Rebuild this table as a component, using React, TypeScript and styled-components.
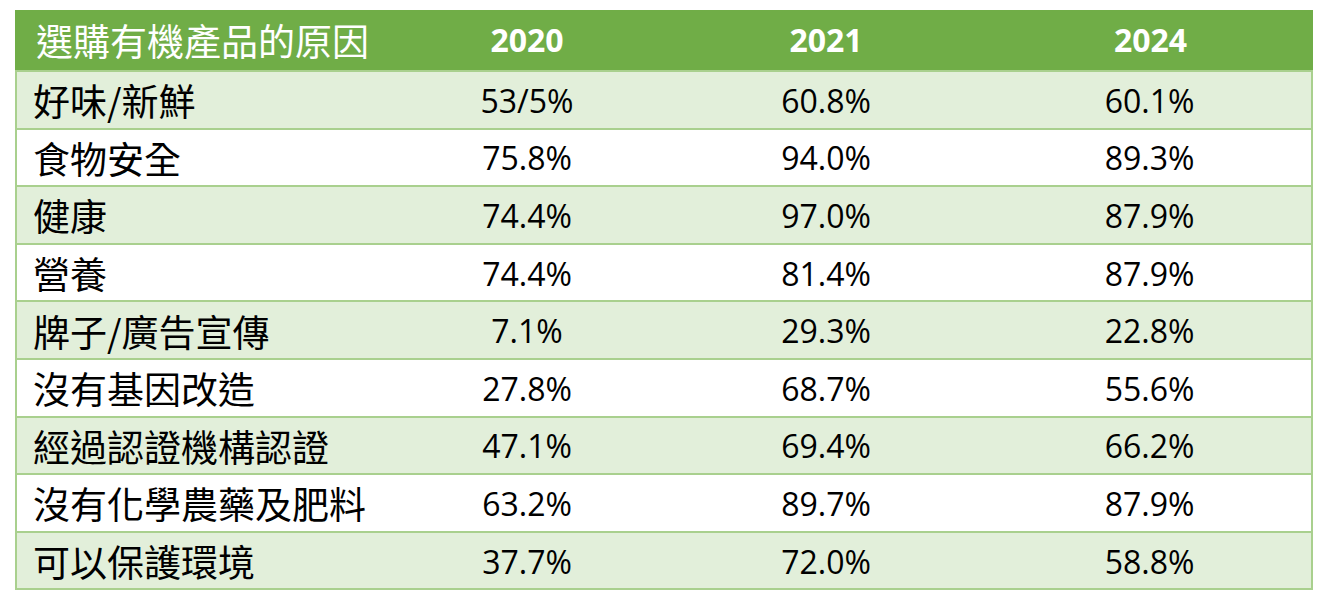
import React from "react";
import styled, { createGlobalStyle } from "styled-components";

const GlobalStyle = createGlobalStyle`
  body {
    margin: 0;
    background: #ffffff;
  }
`;

const Page = styled.div`
  padding: 10px 0 0 15px;
`;

const Table = styled.div`
  width: 1298px;
  display: grid;
  grid-template-columns: 375px 274px 324px 325px;
`;

const cjk = `"Noto Sans CJK TC", "Noto Sans", sans-serif`;
const latin = `"Open Sans", "Noto Sans", sans-serif`;

const HeadCell = styled.div<{ $first?: boolean }>`
  height: 60px;
  background: #70ad47;
  color: #ffffff;
  display: flex;
  align-items: center;
  justify-content: ${(p) => (p.$first ? "flex-start" : "center")};
  padding-left: ${(p) => (p.$first ? "21px" : "0")};
  font-family: ${(p) => (p.$first ? cjk : latin)};
  font-size: ${(p) => (p.$first ? "37px" : "32px")};
  font-weight: ${(p) => (p.$first ? 400 : 700)};
  line-height: 1;
`;

const Cell = styled.div<{
  $shade: boolean;
  $first?: boolean;
  $last?: boolean;
  $bottom?: boolean;
}>`
  height: ${(p) => (p.$bottom ? "59.6px" : "57.6px")};
  box-sizing: border-box;
  border-top: 2px solid #a9d08e;
  border-left: ${(p) => (p.$first ? "2px solid #a9d08e" : "none")};
  border-right: ${(p) => (p.$last ? "2px solid #a9d08e" : "none")};
  border-bottom: ${(p) => (p.$bottom ? "2px solid #a9d08e" : "none")};
  background: ${(p) => (p.$shade ? "#e2efda" : "#ffffff")};
  color: #000000;
  display: flex;
  align-items: center;
  justify-content: ${(p) => (p.$first ? "flex-start" : "center")};
  padding-left: ${(p) => (p.$first ? "16px" : "0")};
  padding-top: 2px;
  font-family: ${(p) => (p.$first ? cjk : latin)};
  font-size: ${(p) => (p.$first ? "37px" : "32px")};
  line-height: 1;
`;

const rows: [string, string, string, string][] = [
  ["好味/新鮮", "53/5%", "60.8%", "60.1%"],
  ["食物安全", "75.8%", "94.0%", "89.3%"],
  ["健康", "74.4%", "97.0%", "87.9%"],
  ["營養", "74.4%", "81.4%", "87.9%"],
  ["牌子/廣告宣傳", "7.1%", "29.3%", "22.8%"],
  ["沒有基因改造", "27.8%", "68.7%", "55.6%"],
  ["經過認證機構認證", "47.1%", "69.4%", "66.2%"],
  ["沒有化學農藥及肥料", "63.2%", "89.7%", "87.9%"],
  ["可以保護環境", "37.7%", "72.0%", "58.8%"],
];

export default function App() {
  return (
    <>
      <GlobalStyle />
      <Page>
        <Table>
          <HeadCell $first>選購有機產品的原因</HeadCell>
          <HeadCell>2020</HeadCell>
          <HeadCell>2021</HeadCell>
          <HeadCell>2024</HeadCell>
          {rows.map((r, i) =>
            r.map((v, j) => (
              <Cell
                key={`${i}-${j}`}
                $shade={i % 2 === 0}
                $first={j === 0}
                $last={j === 3}
                $bottom={i === rows.length - 1}
              >
                {v}
              </Cell>
            ))
          )}
        </Table>
      </Page>
    </>
  );
}
